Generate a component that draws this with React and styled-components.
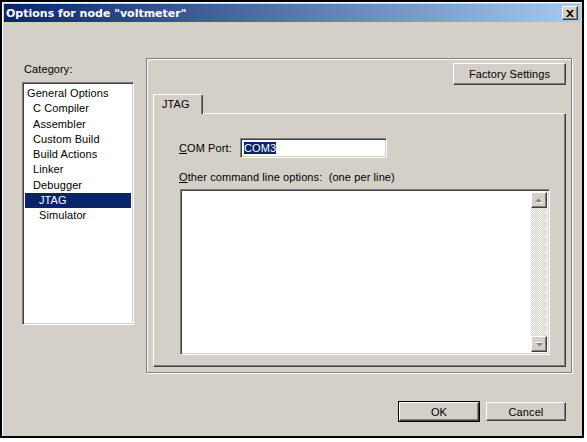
import React from "react";
import styled, { createGlobalStyle } from "styled-components";

const GlobalStyle = createGlobalStyle`
  html, body {
    margin: 0;
    padding: 0;
    background: #fff;
  }
  body {
    font-family: "Liberation Sans", Arial, sans-serif;
    font-size: 11px;
    letter-spacing: 0.1px;
    color: #000;
  }
`;

const Window = styled.div`
  width: 584px;
  height: 438px;
  box-sizing: border-box;
  border: 2px solid #000;
  padding: 2px;
  background: #d4d0c8;
  box-shadow: inset 1px 1px 0 #fff;
  display: flex;
  flex-direction: column;
`;

const TitleBar = styled.div`
  height: 18px;
  flex: none;
  display: flex;
  align-items: center;
  justify-content: space-between;
  padding: 0 2px 0 2px;
  background: linear-gradient(to right, #0a246a, #a6caf0);
`;

const Title = styled.span`
  color: #fff;
  font: bold 11px "DejaVu Sans", Verdana, sans-serif;
  letter-spacing: 0;
  white-space: nowrap;
`;

const raised = `
  border: 1px solid;
  border-color: #fff #404040 #404040 #fff;
  box-shadow: inset -1px -1px 0 #808080;
  background: #d4d0c8;
`;

const CloseButton = styled.div`
  ${raised}
  box-sizing: border-box;
  width: 16px;
  height: 14px;
  display: flex;
  align-items: center;
  justify-content: center;
`;

const Body = styled.div`
  flex: 1;
  display: flex;
  flex-direction: column;
`;

const Main = styled.div`
  display: flex;
  margin-top: 36px;
  padding-left: 18px;
`;

const LeftColumn = styled.div`
  width: 112px;
  padding-top: 5px;
  display: flex;
  flex-direction: column;
`;

const Label = styled.div`
  height: 13px;
  line-height: 13px;
  white-space: nowrap;
`;

const CategoryLabel = styled(Label)`
  padding-left: 2px;
`;

const sunken = `
  border: 1px solid;
  border-color: #808080 #fff #fff #808080;
  box-shadow: inset 1px 1px 0 #404040, inset -1px -1px 0 #d4d0c8;
  background: #fff;
`;

const ListBox = styled.div`
  ${sunken}
  box-sizing: border-box;
  margin-top: 6px;
  height: 243px;
  padding: 3px 2px 2px;
`;

const ListItem = styled.div`
  height: 15.3px;
  line-height: 15px;
  padding-left: ${(p) => 2 + p.level * 6}px;
  white-space: nowrap;
  background: ${(p) => (p.selected ? "#0a246a" : "transparent")};
  color: ${(p) => (p.selected ? "#fff" : "#000")};
`;

const Group = styled.div`
  box-sizing: border-box;
  margin-left: 12px;
  width: 426px;
  height: 315px;
  border: 1px solid #808080;
  box-shadow: 1px 1px 0 #fff, inset 1px 1px 0 #fff;
  padding: 4px 5px 0 6px;
  display: flex;
  flex-direction: column;
`;

const ButtonLine = styled.div`
  display: flex;
  justify-content: flex-end;
`;

const Button = styled.div`
  ${raised}
  box-sizing: border-box;
  width: ${(p) => p.w}px;
  height: ${(p) => p.h}px;
  display: flex;
  align-items: center;
  justify-content: center;
  white-space: nowrap;
`;

const DefaultFrame = styled.div`
  border: 1px solid #000;
  display: flex;
`;

const TabStrip = styled.div`
  display: flex;
  margin-top: 9px;
`;

const Tab = styled.div`
  position: relative;
  z-index: 1;
  box-sizing: border-box;
  width: 50px;
  height: 20px;
  margin-bottom: -1px;
  padding: 3px 0 0 8px;
  line-height: 13px;
  background: #d4d0c8;
  border-left: 1px solid #fff;
  border-top: 1px solid #fff;
  border-right: 1px solid #404040;
  border-top-left-radius: 2px;
  border-top-right-radius: 2px;
  box-shadow: inset -1px 0 0 #808080;
`;

const Page = styled.div`
  box-sizing: border-box;
  height: 254px;
  border: 1px solid;
  border-color: #fff #404040 #404040 #fff;
  box-shadow: inset -1px -1px 0 #808080;
  padding: 24px 0 0 25px;
  display: flex;
  flex-direction: column;
`;

const FieldRow = styled.div`
  display: flex;
  align-items: center;
`;

const FieldLabel = styled.span`
  width: 61px;
  white-space: nowrap;
`;

const TextInput = styled.div`
  ${sunken}
  box-sizing: border-box;
  width: 147px;
  height: 20px;
  padding: 2px 0 0 3px;
  line-height: 14px;
`;

const Selected = styled.span`
  background: #0a246a;
  color: #fff;
`;

const OptionsLabel = styled(Label)`
  margin-top: 13px;
`;

const TextArea = styled.div`
  ${sunken}
  box-sizing: border-box;
  margin: 5px 0 0 1px;
  width: 370px;
  height: 166px;
  padding: 2px;
  display: flex;
  justify-content: flex-end;
`;

const ScrollBar = styled.div`
  width: 16px;
  display: flex;
  flex-direction: column;
  justify-content: space-between;
  background: repeating-conic-gradient(#fff 0 25%, #d4d0c8 0 50%) 0 0 / 2px 2px;
`;

const ArrowButton = styled.div`
  ${raised}
  box-sizing: border-box;
  width: 16px;
  height: 16px;
  display: flex;
  align-items: center;
  justify-content: center;
`;

const Footer = styled.div`
  margin-top: auto;
  padding: 0 14px 12px 0;
  display: flex;
  justify-content: flex-end;
  align-items: center;
  gap: 6px;
`;

const categories = [
  { name: "General Options", level: 0 },
  { name: "C Compiler", level: 1 },
  { name: "Assembler", level: 1 },
  { name: "Custom Build", level: 1 },
  { name: "Build Actions", level: 1 },
  { name: "Linker", level: 1 },
  { name: "Debugger", level: 1 },
  { name: "JTAG", level: 2, selected: true },
  { name: "Simulator", level: 2 },
];

const CloseGlyph = () => (
  <svg width="8" height="7" viewBox="0 0 8 7">
    <path d="M0 0h2l2 2 2-2h2L5 3.5 8 7H6L4 5 2 7H0l3-3.5z" fill="#000" />
  </svg>
);

const Arrow = ({ down }) => (
  <svg width="8" height="5" viewBox="0 0 8 5">
    <g transform={down ? "rotate(180 4 2.5)" : undefined}>
      <path d="M1 5h7L4.5 1.5z" fill="#fff" />
      <path d="M0 4h7L3.5 0.5z" fill="#808080" />
    </g>
  </svg>
);

export default function App() {
  return (
    <>
      <GlobalStyle />
      <Window>
        <TitleBar>
          <Title>Options for node "voltmeter"</Title>
          <CloseButton>
            <CloseGlyph />
          </CloseButton>
        </TitleBar>
        <Body>
          <Main>
            <LeftColumn>
              <CategoryLabel>Category:</CategoryLabel>
              <ListBox>
                {categories.map((c) => (
                  <ListItem key={c.name} level={c.level} selected={c.selected}>
                    {c.name}
                  </ListItem>
                ))}
              </ListBox>
            </LeftColumn>
            <Group>
              <ButtonLine>
                <Button w={113} h={22}>Factory Settings</Button>
              </ButtonLine>
              <TabStrip>
                <Tab>JTAG</Tab>
              </TabStrip>
              <Page>
                <FieldRow>
                  <FieldLabel>
                    <u>C</u>OM Port:
                  </FieldLabel>
                  <TextInput>
                    <Selected>COM3</Selected>
                  </TextInput>
                </FieldRow>
                <OptionsLabel>
                  <u>O</u>ther command line options:&nbsp; (one per line)
                </OptionsLabel>
                <TextArea>
                  <ScrollBar>
                    <ArrowButton>
                      <Arrow />
                    </ArrowButton>
                    <ArrowButton>
                      <Arrow down />
                    </ArrowButton>
                  </ScrollBar>
                </TextArea>
              </Page>
            </Group>
          </Main>
          <Footer>
            <DefaultFrame>
              <Button w={80} h={19}>OK</Button>
            </DefaultFrame>
            <Button w={80} h={19}>Cancel</Button>
          </Footer>
        </Body>
      </Window>
    </>
  );
}
